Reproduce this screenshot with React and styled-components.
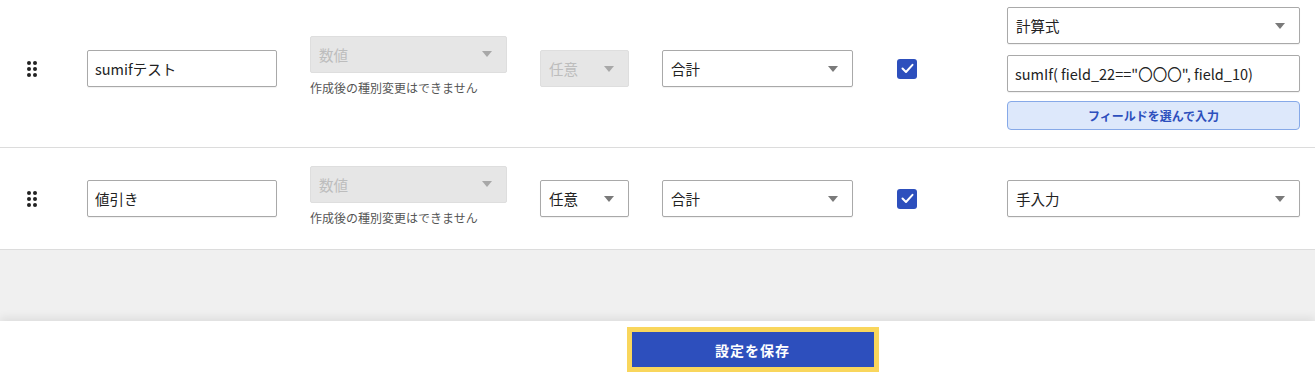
import React from 'react';
import styled, { createGlobalStyle } from 'styled-components';

const GlobalStyle = createGlobalStyle`
  body {
    margin: 0;
    background: #fff;
    font-family: 'Noto Sans CJK JP', 'Noto Sans', sans-serif;
    color: #222;
  }
`;

const Page = styled.div`
  width: 1315px;
  height: 376px;
  display: flex;
  flex-direction: column;
  overflow: hidden;
`;

const Row = styled.div`
  display: grid;
  grid-template-columns: 27px 190px 197px 89px 191px 88px 293px;
  column-gap: 33px;
  align-items: center;
  padding: ${p => p.$pad};
  min-height: ${p => p.$minH}px;
  box-sizing: border-box;
  background: #fff;
  border-bottom: 1px solid #dcdcdc;
`;

const Handle = styled.div`
  display: grid;
  grid-template-columns: 4px 4px;
  gap: 2px 2px;
  width: 10px;
  span {
    width: 4px;
    height: 4px;
    border-radius: 50%;
    background: #222;
  }
`;

const TextInput = styled.input`
  box-sizing: border-box;
  width: 100%;
  height: 37px;
  border: 1px solid #a9a9a9;
  border-radius: 2px;
  padding: 0 7px;
  font-family: inherit;
  font-size: 14.5px;
  color: #222;
  background: #fff;
  box-shadow: 0 1px 1px rgba(0, 0, 0, 0.06);
  outline: none;
`;

const SelectBox = styled.div`
  box-sizing: border-box;
  width: 100%;
  height: 37px;
  display: flex;
  align-items: center;
  justify-content: space-between;
  padding: 0 14px 0 8px;
  border: 1px solid ${p => (p.$disabled ? '#dedede' : '#a9a9a9')};
  border-radius: 2px;
  background: ${p => (p.$disabled ? '#e6e6e6' : '#fff')};
  color: ${p => (p.$disabled ? '#bdbdbd' : '#222')};
  font-size: 14.5px;
  box-shadow: ${p => (p.$disabled ? 'none' : '0 1px 1px rgba(0,0,0,0.06)')};
`;

const Caret = styled.span`
  width: 0;
  height: 0;
  border-left: 5px solid transparent;
  border-right: 5px solid transparent;
  border-top: 6px solid ${p => (p.$disabled ? '#a8a8a8' : '#7a7a7a')};
`;

const TypeCell = styled.div`
  display: flex;
  flex-direction: column;
  gap: 6px;
  margin-top: ${p => p.$shift}px;
`;

const Hint = styled.div`
  font-size: 12px;
  color: #555;
  line-height: 17px;
`;

const CheckCell = styled.div`
  padding-left: 11px;
  display: flex;
`;

const Check = styled.div`
  width: 20px;
  height: 20px;
  border-radius: 3px;
  background: #2d4fbd;
  display: flex;
  align-items: center;
  justify-content: center;
`;

const FormulaCol = styled.div`
  display: flex;
  flex-direction: column;
  gap: 11px;
`;

const PickButton = styled.button`
  box-sizing: border-box;
  height: 29px;
  margin-top: -2px;
  width: 100%;
  border: 1px solid #86a9e8;
  border-radius: 4px;
  background: #dde8fb;
  color: #2d4fbd;
  font-family: inherit;
  font-weight: 700;
  font-size: 12px;
`;

const Filler = styled.div`
  height: 71px;
  background: #f0f0f0;
`;

const Footer = styled.div`
  flex: 1;
  display: flex;
  justify-content: center;
  align-items: flex-start;
  padding: 6px 0 0 190px;
  background: #fff;
  box-shadow: 0 -4px 8px rgba(0, 0, 0, 0.07);
  position: relative;
`;

const SaveButton = styled.button`
  width: 252px;
  height: 45px;
  box-sizing: border-box;
  border: 5px solid #f9d65c;
  background: #2d4fbd;
  color: #fff;
  font-family: inherit;
  font-weight: 700;
  font-size: 14px;
  letter-spacing: 1px;
`;

function Select({ value, disabled }) {
  return (
    <SelectBox $disabled={disabled}>
      <span>{value}</span>
      <Caret $disabled={disabled} />
    </SelectBox>
  );
}

function DragHandle() {
  return (
    <Handle>
      {[0, 1, 2, 3, 4, 5].map(i => <span key={i} />)}
    </Handle>
  );
}

function CheckMark() {
  return (
    <Check>
      <svg width="13" height="11" viewBox="0 0 13 11">
        <path d="M1.5 5.5 L5 9 L11.5 1.8" fill="none" stroke="#fff" strokeWidth="2" strokeLinecap="round" strokeLinejoin="round" />
      </svg>
    </Check>
  );
}

export default function App() {
  return (
    <Page>
      <GlobalStyle />
      <Row $pad="7px 15px 17px 27px" $minH={148}>
        <DragHandle />
        <TextInput defaultValue="sumifテスト" />
        <TypeCell $shift={-6}>
          <Select value="数値" disabled />
          <Hint>作成後の種別変更はできません</Hint>
        </TypeCell>
        <Select value="任意" disabled />
        <Select value="合計" />
        <CheckCell><CheckMark /></CheckCell>
        <FormulaCol>
          <Select value="計算式" />
          <TextInput defaultValue={'sumIf( field_22=="〇〇〇", field_10)'} />
          <PickButton>フィールドを選んで入力</PickButton>
        </FormulaCol>
      </Row>
      <Row $pad="0 15px 0 27px" $minH={102}>
        <DragHandle />
        <TextInput defaultValue="値引き" />
        <TypeCell $shift={-6}>
          <Select value="数値" disabled />
          <Hint>作成後の種別変更はできません</Hint>
        </TypeCell>
        <Select value="任意" />
        <Select value="合計" />
        <CheckCell><CheckMark /></CheckCell>
        <Select value="手入力" />
      </Row>
      <Filler />
      <Footer>
        <SaveButton>設定を保存</SaveButton>
      </Footer>
    </Page>
  );
}
